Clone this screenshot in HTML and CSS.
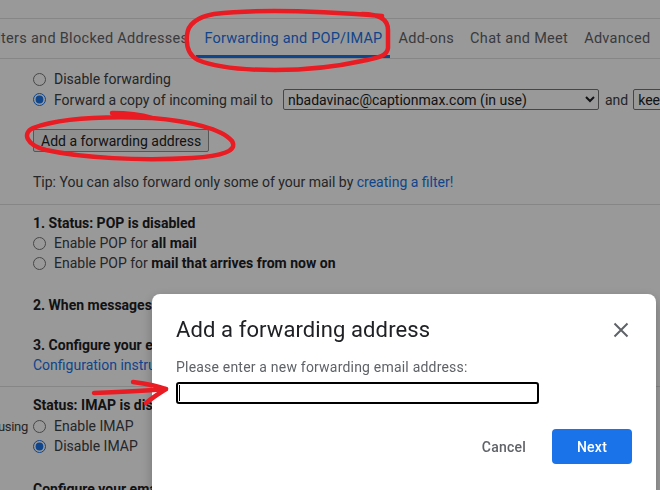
FILE: index.html
```html
<!DOCTYPE html>
<html lang="en">
<head>
  <meta charset="UTF-8">
  <meta name="viewport" content="width=device-width, initial-scale=1">
  <title>Settings - Forwarding and POP/IMAP</title>
  <link rel="stylesheet" href="styles.css">
</head>
<body>

  <div class="page">
    <div class="topbar"></div>

    <!-- Settings tabs -->
    <nav class="tabs">
      <span class="tab">Filters and Blocked Addresses</span>
      <span class="tab active">Forwarding and POP/IMAP</span>
      <span class="tab">Add-ons</span>
      <span class="tab">Chat and Meet</span>
      <span class="tab">Advanced</span>
    </nav>

    <!-- Forwarding -->
    <section class="block fwd">
      <label class="opt"><input type="radio" name="fwd">Disable forwarding</label>
      <div class="opt opt-select">
        <input type="radio" name="fwd" checked>Forward a copy of incoming mail to
        <select class="sel-addr"><option>nbadavinac@captionmax.com (in use)</option></select>
        and
        <select class="sel-keep"><option>keep Gmail's copy in the Inbox</option></select>
      </div>
      <button class="btn-add">Add a forwarding address</button>
      <p class="row tip">Tip: You can also forward only some of your mail by <a href="#">creating a filter!</a></p>
    </section>

    <!-- POP -->
    <section class="block pop">
      <p class="row head">1. Status: POP is disabled</p>
      <label class="opt"><input type="radio" name="pop">Enable POP for&nbsp;<b>all mail</b></label>
      <label class="opt"><input type="radio" name="pop">Enable POP for&nbsp;<b>mail that arrives from now on</b></label>
      <p class="row head step2">2. When messages are accessed with POP</p>
      <p class="row head step3">3. Configure your email client (e.g. Outlook, Eudora, Netscape Mail)</p>
      <p class="row"><a href="#">Configuration instructions</a></p>
    </section>

    <!-- IMAP -->
    <section class="block imap">
      <p class="row head">Status: IMAP is disabled</p>
      <label class="opt opt-first"><span class="side">using</span><input type="radio" name="imap">Enable IMAP</label>
      <label class="opt"><input type="radio" name="imap" checked>Disable IMAP</label>
      <p class="row head step-cfg">Configure your email client (e.g. Outlook, Thunderbird, iPhone)</p>
    </section>
  </div>

  <div class="scrim"></div>

  <!-- Dialog -->
  <div class="dialog">
    <div class="dlg-head">
      <h2>Add a forwarding address</h2>
      <span class="dlg-close">
        <svg width="24" height="24" viewBox="0 0 24 24"><path d="M5.5 5.5 18.5 18.5M18.5 5.5 5.5 18.5" stroke="#5f6368" stroke-width="2" fill="none"/></svg>
      </span>
    </div>
    <p class="dlg-label">Please enter a new forwarding email address:</p>
    <div class="dlg-input"><span class="caret"></span></div>
    <div class="dlg-foot">
      <button class="btn-text">Cancel</button>
      <button class="btn-primary">Next</button>
    </div>
  </div>

  <!-- Red pen marks -->
  <svg class="marks" width="660" height="490" viewBox="0 0 660 490">
    <g fill="none" stroke="#e81c22" stroke-width="4.5" stroke-linecap="round" stroke-linejoin="round">
      <path d="M362 14 C378 14 388 18 388 30 L388 48 C387 57 376 58 362 61 C335 67 305 70 275 70 C240 70 212 66 198 60 C188 55 186 45 187 35 C188 23 198 17 214 14 C255 9 320 11 382 16"/>
      <path d="M112 113 C128 113 142 115 152 118 C190 121 222 129 232 141 C238 151 222 156 192 158 C140 161 82 158 46 150 C26 145 22 133 33 128 C58 119 100 116 150 118"/>
      <path d="M94 393 C120 392 145 391 166 389"/>
      <path d="M133 382 C148 384 158 386 166 389 C158 394 152 398 146 403"/>
    </g>
  </svg>

</body>
</html>
```

FILE: styles.css
```css
:root {
  --text: #3c4043;
  --strong: #202124;
  --muted: #5f6368;
  --blue: #1a73e8;
  --line: #e0e0e0;
  --red: #e81c22;
}

* {
  box-sizing: border-box;
  margin: 0;
  padding: 0;
}

body {
  font-family: Roboto, "Liberation Sans", sans-serif;
  font-size: 14px;
  color: var(--text);
  background: #fff;
  width: 660px;
  height: 490px;
  overflow: hidden;
}

.page {
  white-space: nowrap;
}

.topbar {
  height: 19px;
  border-bottom: 1px solid var(--line);
}

.tabs {
  display: flex;
  height: 40px;
  margin-left: -23px;
  border-bottom: 1px solid var(--line);
}

.tab {
  flex-shrink: 0;
  padding: 1px 8px 0;
  line-height: 38px;
  font-size: 14.5px;
  color: var(--muted);
  letter-spacing: 0.3px;
  border-bottom: 3px solid transparent;
}

.tab.active {
  color: var(--blue);
  letter-spacing: 0.2px;
  border-bottom-color: var(--blue);
}

.block {
  padding-left: 33px;
  border-bottom: 1px solid var(--line);
}

.row {
  line-height: 20px;
}

.head {
  font-weight: bold;
  color: var(--strong);
}

.opt {
  display: flex;
  align-items: center;
  height: 20px;
}

.opt > * {
  flex-shrink: 0;
}

.opt input[type="radio"] {
  width: 13px;
  height: 13px;
  margin: 0 8px 0 0;
  accent-color: var(--blue);
}

.opt b {
  color: var(--strong);
}

a {
  color: var(--blue);
  text-decoration: none;
}

/* forwarding */
.fwd {
  padding-top: 10px;
  padding-bottom: 12px;
}

.opt-select {
  height: 21px;
}

select {
  font-family: Roboto, "Liberation Sans", sans-serif;
  font-size: 14px;
  height: 21px;
  color: var(--strong);
  background: #fff;
  border: 1px solid #767676;
  border-radius: 2px;
}

.sel-addr {
  width: 316px;
  margin: 0 6px 0 10px;
}

.sel-keep {
  width: 240px;
  margin-left: 5px;
}

.btn-add {
  display: block;
  margin-top: 19px;
  height: 23px;
  padding: 0 7px;
  font-family: Roboto, "Liberation Sans", sans-serif;
  font-size: 14px;
  color: var(--strong);
  background: #efefef;
  border: 1px solid #8f8f8f;
  border-radius: 2px;
}

.tip {
  margin-top: 20px;
}

/* pop */
.pop {
  padding-top: 8px;
  padding-bottom: 11px;
}

.step2 {
  margin-top: 22px;
}

.step3 {
  margin-top: 20px;
}

/* imap */
.imap {
  padding-top: 8px;
  border-bottom: none;
}

.opt-first {
  margin-top: 1px;
}

.side {
  display: flex;
  justify-content: flex-end;
  width: 33px;
  margin-left: -33px;
  padding-right: 5px;
  font-size: 13px;
  letter-spacing: -0.3px;
}

.step-cfg {
  margin-top: 23px;
}

/* modal */
.scrim {
  position: fixed;
  inset: 0;
  background: rgba(0, 0, 0, 0.4);
}

.dialog {
  position: fixed;
  left: 152px;
  top: 294px;
  width: 504px;
  height: 230px;
  background: #fff;
  border-radius: 8px;
  padding: 22px 24px 0 24px;
  box-shadow: 0 4px 12px rgba(0, 0, 0, 0.25);
}

.dlg-head {
  display: flex;
  align-items: center;
  justify-content: space-between;
  height: 28px;
}

.dlg-head h2 {
  font-size: 22px;
  font-weight: 400;
  line-height: 28px;
  letter-spacing: 0.1px;
  color: var(--strong);
}

.dlg-close {
  display: flex;
  margin-right: -1px;
}

.dlg-label {
  margin-top: 13px;
  line-height: 20px;
  letter-spacing: 0.2px;
  color: var(--muted);
}

.dlg-input {
  display: flex;
  align-items: center;
  margin-top: 5px;
  width: 363px;
  height: 22px;
  border: 2px solid #000;
  border-radius: 3px;
}

.caret {
  width: 1px;
  height: 16px;
  margin-left: 1px;
  background: #000;
}

.dlg-foot {
  display: flex;
  justify-content: flex-end;
  gap: 8px;
  margin-top: 25px;
}

.dlg-foot button {
  width: 80px;
  height: 35px;
  border: none;
  border-radius: 4px;
  font-family: Roboto, "Liberation Sans", sans-serif;
  font-size: 14px;
  font-weight: 500;
  letter-spacing: 0.25px;
}

.btn-text {
  background: transparent;
  color: var(--muted);
}

.btn-primary {
  background: var(--blue);
  color: #fff;
  font-weight: bold;
}

.marks {
  position: fixed;
  left: 0;
  top: 0;
  pointer-events: none;
}
```
